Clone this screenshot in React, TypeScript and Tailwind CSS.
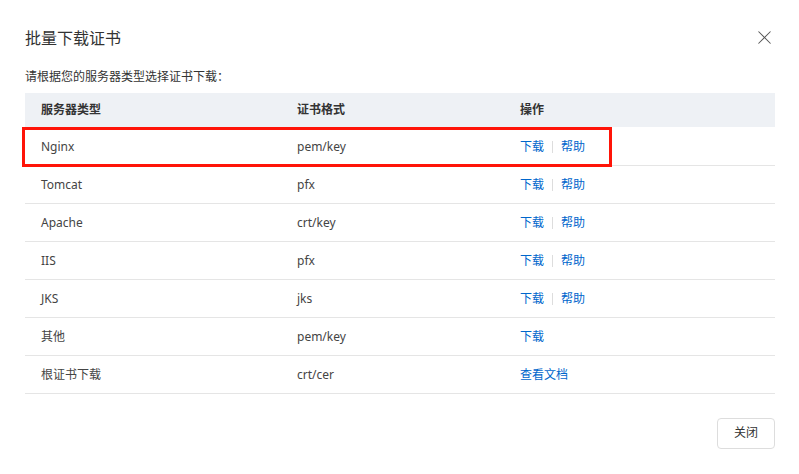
import { X } from 'lucide-react'

const ROWS = [
  { type: 'Nginx', fmt: 'pem/key', ops: ['下载', '帮助'] },
  { type: 'Tomcat', fmt: 'pfx', ops: ['下载', '帮助'] },
  { type: 'Apache', fmt: 'crt/key', ops: ['下载', '帮助'] },
  { type: 'IIS', fmt: 'pfx', ops: ['下载', '帮助'] },
  { type: 'JKS', fmt: 'jks', ops: ['下载', '帮助'] },
  { type: '其他', fmt: 'pem/key', ops: ['下载'] },
  { type: '根证书下载', fmt: 'crt/cer', ops: ['查看文档'] },
]

export default function App() {
  return (
    <div
      className="relative h-[474px] w-[799px] bg-white px-[25px] text-[#333]"
      style={{ fontFamily: '"Noto Sans", "Noto Sans CJK SC", sans-serif' }}
    >
      <div className="flex items-center justify-between pt-[26px]">
        <h2 className="text-base leading-6 text-[#333]">批量下载证书</h2>
        <button className="-mr-[2px] -mt-[2px] text-[#555]">
          <X size={23} strokeWidth={1.1} />
        </button>
      </div>

      <p className="mt-[18px] text-xs leading-[18px] text-[#333]">请根据您的服务器类型选择证书下载：</p>

      <table className="mt-[7px] w-[750px] table-fixed border-collapse text-xs">
        <colgroup>
          <col className="w-[272px]" />
          <col className="w-[223px]" />
          <col />
        </colgroup>
        <thead>
          <tr className="h-[34px] bg-[#eef1f5] text-left text-[#333]">
            <th className="pl-4 font-bold">服务器类型</th>
            <th className="font-bold">证书格式</th>
            <th className="font-bold">操作</th>
          </tr>
        </thead>
        <tbody>
          {ROWS.map((r) => (
            <tr key={r.type} className="h-[38px] border-b border-[#e5e5e5] text-[#444]">
              <td className="pl-4 pt-[2px]">{r.type}</td>
              <td className="pt-[2px]">{r.fmt}</td>
              <td className="pt-[2px]">
                <div className="flex items-center text-[#0066cc]">
                  {r.ops.map((o, i) => (
                    <span key={o} className="flex items-center">
                      {i > 0 && <span className="mx-2 h-3 w-px bg-[#ddd]" />}
                      {o}
                    </span>
                  ))}
                </div>
              </td>
            </tr>
          ))}
        </tbody>
      </table>

      <div className="mt-6 flex justify-end">
        <button className="-mr-px h-[31px] w-[58px] rounded-sm border border-[#ddd] bg-white text-xs text-[#333]">
          关闭
        </button>
      </div>

      <div className="pointer-events-none absolute left-[22px] top-[127px] h-[40px] w-[590px] border-[3px] border-[#ff1408]" />
    </div>
  )
}
